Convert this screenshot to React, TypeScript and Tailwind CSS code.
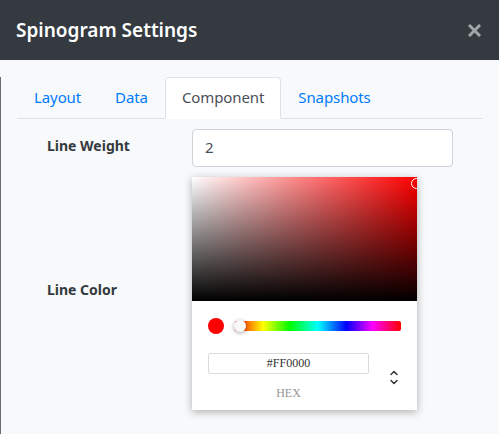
import { ChevronUp, ChevronDown } from "lucide-react";

const tabs = ["Layout", "Data", "Component", "Snapshots"];

function ColorPicker() {
  return (
    <div className="w-[225px] bg-white shadow-[0_2px_8px_rgba(0,0,0,0.3)]">
      {/* saturation / value area */}
      <div className="relative h-[124px] overflow-hidden bg-[#ff0000]">
        <div className="absolute inset-0 bg-gradient-to-r from-white to-transparent" />
        <div className="absolute inset-0 bg-gradient-to-t from-black to-transparent" />
        <div className="absolute -right-[5px] top-[1px] h-[11px] w-[11px] rounded-full border-[1.5px] border-white" />
      </div>
      <div className="px-4 pt-[17px] pb-[8px]">
        <div className="flex items-center gap-[11px]">
          <div className="h-4 w-4 shrink-0 rounded-full bg-[#ff0000]" />
          <div className="relative h-[10px] flex-1 rounded-[2px] bg-[linear-gradient(to_right,#f00_0%,#ff0_17%,#0f0_33%,#0ff_50%,#00f_67%,#f0f_83%,#f00_100%)]">
            <div className="absolute -left-[1px] -top-[1px] h-3 w-3 rounded-full bg-[#f8f8f8] shadow-[0_1px_4px_rgba(0,0,0,0.37)]" />
          </div>
        </div>
        <div className="mt-[19px] flex">
          <div className="flex w-[161px] flex-col items-center">
            <div className="flex h-[21px] w-full items-center justify-center rounded-[2px] border border-[#dadada] font-['Liberation_Serif',serif] text-[12px] text-[#333]">
              #FF0000
            </div>
            <div className="mt-[10px] font-['Liberation_Serif',serif] text-[12px] text-[#969696]">HEX</div>
          </div>
          <div className="ml-auto mr-[1px] mt-[14px] flex flex-col items-center text-[#333]">
            <ChevronUp size={12} strokeWidth={3} />
            <ChevronDown size={12} strokeWidth={3} className="-mt-[3px]" />
          </div>
        </div>
      </div>
    </div>
  );
}

export default function App() {
  return (
    <div className="h-[434px] w-[499px] overflow-hidden bg-[#f8f9fa] font-['Noto_Sans',sans-serif]">
      <div className="flex h-[60px] items-center justify-between bg-[#343a40] pl-4 pr-[18px]">
        <h1 className="text-[19px] font-semibold text-white">Spinogram Settings</h1>
        <svg width="13" height="13" viewBox="0 0 13 13" className="text-[#a2a5a8]">
          <path d="M2 2 L11 11 M11 2 L2 11" stroke="currentColor" strokeWidth="3" strokeLinecap="square" />
        </svg>
      </div>
      <div className="h-full border-l border-[#6c6c6c]">
        <div className="mx-4 mt-[17px] flex border-b border-[#dee2e6]">
          {tabs.map((t) => (
            <div
              key={t}
              className={
                t === "Component"
                  ? "-mb-px rounded-t border border-[#dee2e6] border-b-white bg-white px-4 py-2 text-[15px] tracking-[-0.1px] text-[#495057]"
                  : "border border-transparent px-4 py-2 text-[15px] tracking-[-0.1px] text-[#007bff]"
              }
            >
              {t}
            </div>
          ))}
        </div>
        <div className="mt-[10px] grid grid-cols-[145px_1fr] pl-[46px] pr-[46px]">
          <div className="pt-[6px] text-[14px] font-bold text-[#343a40]">Line Weight</div>
          <div className="flex h-[38px] items-center rounded border border-[#ced4da] bg-white px-3 text-[15px] text-[#495057]">
            2
          </div>
          <div className="mt-[112px] text-[14px] font-bold text-[#343a40]">Line Color</div>
          <div className="mt-[10px]">
            <ColorPicker />
          </div>
        </div>
      </div>
    </div>
  );
}
